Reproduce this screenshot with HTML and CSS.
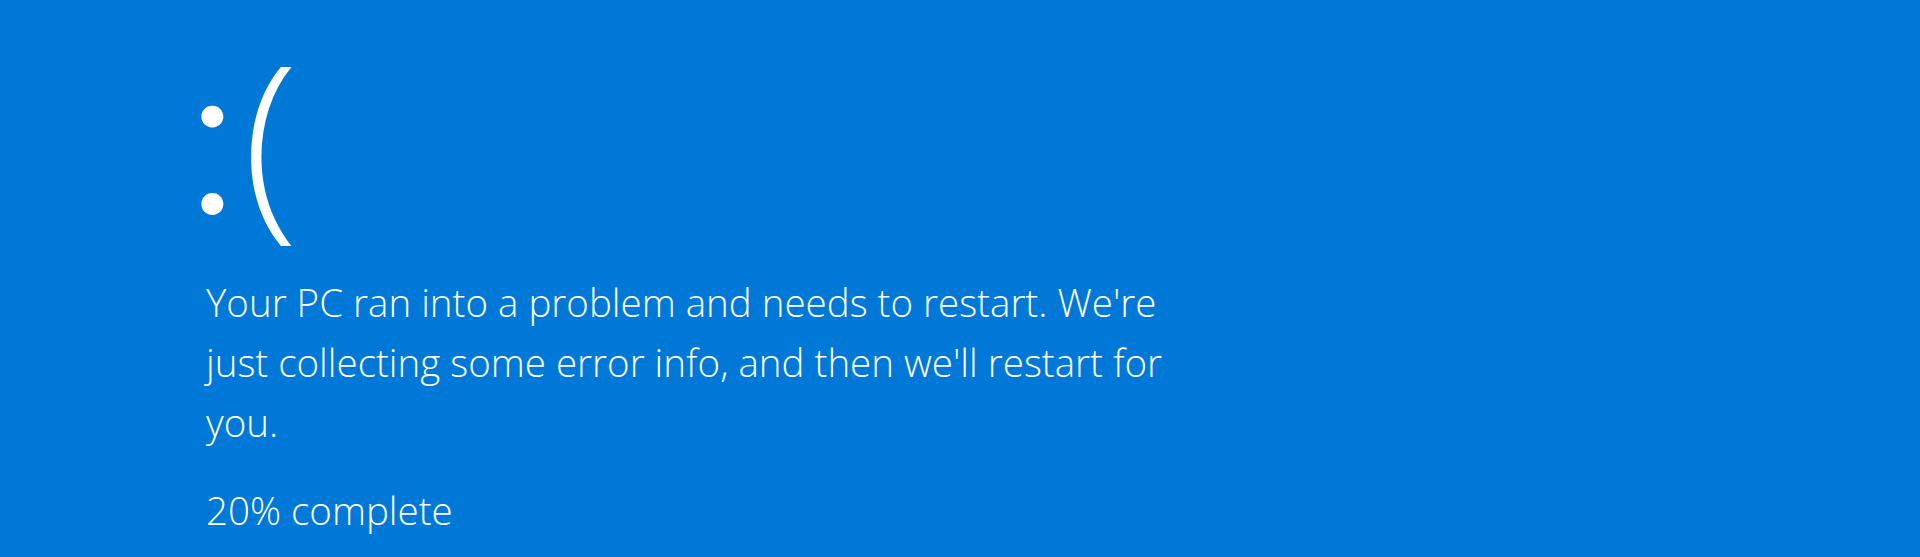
FILE: index.html
```html
<!DOCTYPE html>
<html lang="en">
<head>
<meta charset="utf-8">
<title>Your PC ran into a problem</title>
<link rel="stylesheet" href="styles.css">
</head>
<body>
<main class="bsod">
  <div class="face"><span class="colon">:</span><span class="paren">(</span></div>
  <p class="message">Your PC ran into a problem and needs to restart. We're just collecting some error info, and then we'll restart for you.</p>
  <p class="progress">20% complete</p>
</main>
</body>
</html>
```
FILE: styles.css
```css
html, body {
  margin: 0;
  padding: 0;
  height: 100%;
}
body {
  background: #0078d7;
  color: #ffffff;
  font-family: "Open Sans", "Noto Sans", sans-serif;
  font-weight: 300;
  overflow: hidden;
}
.bsod {
  display: flex;
  flex-direction: column;
  align-items: flex-start;
  padding: 0 0 0 206px;
}
.face {
  font-size: 204px;
  line-height: 270px;
  height: 270px;
  margin-left: -23px;
}
.colon {
  font-family: "Inter", "Open Sans", sans-serif;
  font-weight: 300;
  font-size: 208px;
  line-height: 1;
}
.paren {
  font-weight: 300;
  margin-left: 1px;
}
.message {
  margin: 2px 0 0;
  width: 990px;
  font-size: 38.5px;
  line-height: 60px;
}
.progress {
  margin: 28px 0 0;
  font-size: 38.5px;
  line-height: 60px;
}
```
